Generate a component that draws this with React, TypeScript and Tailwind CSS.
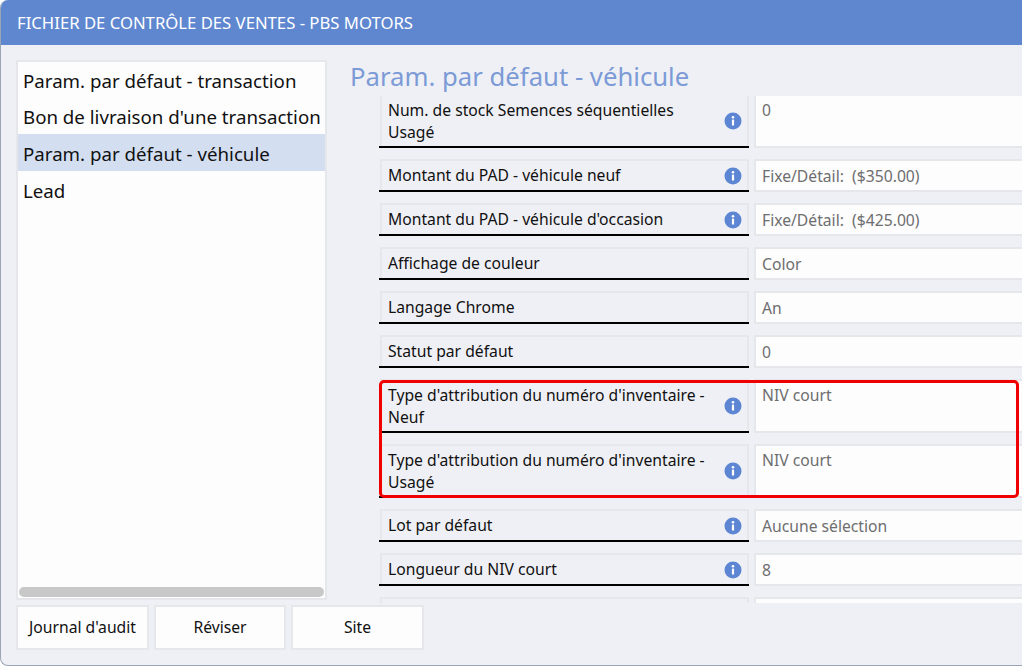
const menuItems = [
  "Param. par défaut - transaction",
  "Bon de livraison d'une transaction",
  "Param. par défaut - véhicule",
  "Lead",
];

function InfoIcon() {
  return (
    <svg width="18" height="18" viewBox="0 0 18 18" className="shrink-0">
      <circle cx="9" cy="9" r="8.5" fill="#5c85d3" />
      <circle cx="9" cy="5.2" r="1.3" fill="#fff" />
      <rect x="7.9" y="7.6" width="2.2" height="6" rx="0.4" fill="#fff" />
    </svg>
  );
}

interface RowProps {
  label: string;
  value?: string;
  info?: boolean;
  tall?: boolean;
}

function Row({ label, value, info, tall }: RowProps) {
  return (
    <div className={`flex shrink-0 ${tall ? "h-[54px]" : "h-[33px]"}`}>
      <div className="w-[370px] shrink-0 pl-px">
        <div className="h-full -ml-px pl-px border-b-2 border-black">
          <div className="h-full border-x-2 border-t-2 border-[#e6e7eb] flex items-center pl-[6px] pr-[5px] gap-2">
            <div className={`flex-1 text-[15.7px] leading-[22px] text-[#111] ${tall ? "" : "-mt-px"}`}>{label}</div>
            {info && <InfoIcon />}
          </div>
        </div>
      </div>
      <div className={`ml-[5px] w-[300px] shrink-0 border-2 border-[#e6e7eb] bg-[#fdfdfe] pl-[6px] text-[15.7px] text-[#6e6e6e] whitespace-pre flex ${tall ? "items-start pt-[3px]" : "items-center pt-[2px]"}`}>
        {value}
      </div>
    </div>
  );
}

export default function App() {
  return (
    <div className="h-[666px] w-[1022px] overflow-hidden bg-white font-['Noto_Sans','Open_Sans',sans-serif]">
      <div className="h-full w-[1040px] flex flex-col rounded-lg overflow-hidden bg-[#eff0f5] border-l border-b border-[#9aa5b5]">
        <div className="h-[45px] shrink-0 bg-[#5f87d0] flex items-center pl-4 text-[16.7px] text-white whitespace-nowrap">
          FICHIER DE CONTRÔLE DES VENTES - PBS MOTORS
        </div>
        <div className="flex flex-1 min-h-0 pt-[15px]">
          <div className="w-[311px] ml-[15px] h-[540px] shrink-0 bg-[#fdfdfe] border-2 border-[#e6e7eb] flex flex-col justify-between pb-px">
            <div className="-mt-px">
              {menuItems.map((item) => (
                <div
                  key={item}
                  className={`h-[36.6px] flex items-center pl-[5px] pt-[3px] text-[18.7px] whitespace-nowrap text-[#111] ${item === "Param. par défaut - véhicule" ? "bg-[#d3dff1]" : ""}`}
                >
                  {item}
                </div>
              ))}
            </div>
            <div className="h-[10px] mx-px rounded-full bg-[#c8c8c8]" />
          </div>
          <div className="flex-1 min-w-0 ml-[23px] flex flex-col">
            <div className="h-[36px] shrink-0 text-[25.7px] leading-[34px] text-[#7b9ad6] whitespace-nowrap">
              Param. par défaut - véhicule
            </div>
            <div className="h-[507px] overflow-hidden pl-[29px] flex flex-col gap-[11px]">
              <div className="-mt-[2px] shrink-0">
                <Row label="Num. de stock Semences séquentielles Usagé" value="0" info tall />
              </div>
              <Row label="Montant du PAD - véhicule neuf" value="Fixe/Détail:  ($350.00)" info />
              <Row label="Montant du PAD - véhicule d'occasion" value="Fixe/Détail:  ($425.00)" info />
              <Row label="Affichage de couleur" value="Color" />
              <Row label="Langage Chrome" value="An" />
              <Row label="Statut par défaut" value="0" />
              <div className="relative flex flex-col gap-[11px] shrink-0">
                <Row label="Type d'attribution du numéro d'inventaire - Neuf" value="NIV court" info tall />
                <Row label="Type d'attribution du numéro d'inventaire - Usagé" value="NIV court" info tall />
                <div className="absolute left-0 top-px w-[640px] h-[118px] rounded-[5px] border-[3px] border-[#f00000]" />
              </div>
              <Row label="Lot par défaut" value="Aucune sélection" info />
              <Row label="Longueur du NIV court" value="8" info />
              <Row label="" value="" />
            </div>
          </div>
        </div>
        <div className="h-[62px] shrink-0 flex gap-[5px] pl-[15px] pt-[2px]">
          <div className="w-[133px] h-[45px] border-2 border-[#e6e7eb] bg-[#fdfdfe] flex items-center justify-center text-[15.7px] text-[#111]">Journal d'audit</div>
          <div className="w-[132px] h-[45px] border-2 border-[#e6e7eb] bg-[#fdfdfe] flex items-center justify-center text-[15.7px] text-[#111]">Réviser</div>
          <div className="w-[133px] h-[45px] border-2 border-[#e6e7eb] bg-[#fdfdfe] flex items-center justify-center text-[15.7px] text-[#111]">Site</div>
        </div>
      </div>
    </div>
  );
}
